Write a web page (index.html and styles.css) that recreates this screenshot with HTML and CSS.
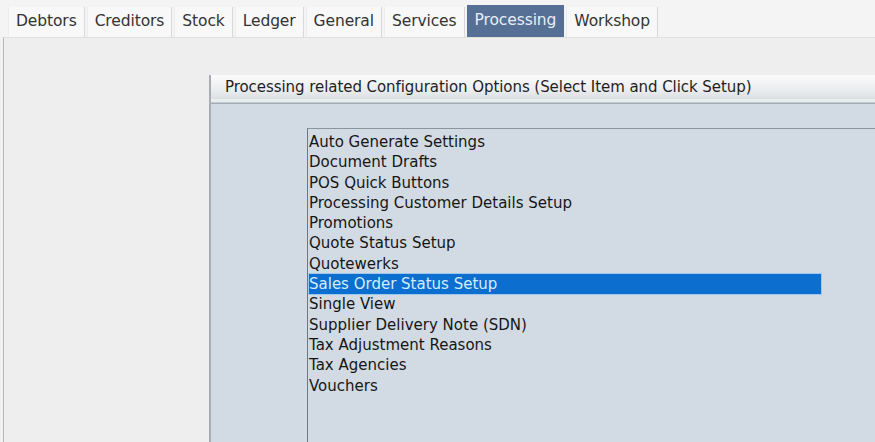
FILE: index.html
```html
<!DOCTYPE html>
<html>
<head>
<meta charset="utf-8">
<link rel="stylesheet" href="styles.css">
</head>
<body>
<div class="tabs">
  <div class="tab">Debtors</div>
  <div class="tab">Creditors</div>
  <div class="tab">Stock</div>
  <div class="tab">Ledger</div>
  <div class="tab">General</div>
  <div class="tab">Services</div>
  <div class="tab active">Processing</div>
  <div class="tab">Workshop</div>
</div>
<div class="content">
  <div class="panel">
    <div class="panel-header">Processing related Configuration Options (Select Item and Click Setup)</div>
    <div class="panel-body">
      <ul class="list">
        <li>Auto Generate Settings</li>
        <li>Document Drafts</li>
        <li>POS Quick Buttons</li>
        <li>Processing Customer Details Setup</li>
        <li>Promotions</li>
        <li>Quote Status Setup</li>
        <li>Quotewerks</li>
        <li class="selected">Sales Order Status Setup</li>
        <li>Single View</li>
        <li>Supplier Delivery Note (SDN)</li>
        <li>Tax Adjustment Reasons</li>
        <li>Tax Agencies</li>
        <li>Vouchers</li>
      </ul>
    </div>
  </div>
</div>
</body>
</html>
```

FILE: styles.css
```css
* { box-sizing: border-box; }
html, body {
  margin: 0;
  padding: 0;
  width: 875px;
  height: 442px;
  overflow: hidden;
  background: #f1f1f2;
  font-family: "DejaVu Sans", "Liberation Sans", sans-serif;
  color: #1a1a1a;
}
.tabs {
  display: flex;
  padding: 7px 0 0 8px;
  height: 37px;
  gap: 2px;
  background: #f4f4f4;
}
.tab {
  height: 30px;
  padding: 0 7px;
  font-size: 15.5px;
  line-height: 28px;
  background: #f8f8f8;
  border-right: 1px solid #d8d8d8;
  border-left: 1px solid #ececec;
  color: #333;
  letter-spacing: -0.1px;
}
.tab.active {
  background: #556f95;
  color: #e6eef8;
  margin-top: -2px;
  height: 32px;
  line-height: 30px;
  border: none;
  padding: 0 8px;
}
.content {
  height: 405px;
  margin-left: 3px;
  border-left: 1px solid #b9b9b9;
  border-top: 1px solid #e0e0e0;
  background: #eeeeef;
  padding: 37px 0 0 205px;
}
.panel {
  height: 100%;
  border-left: 2px solid #a9adb2;
  background: #d2dbe3;
}
.panel-header {
  height: 28px;
  padding-left: 14px;
  line-height: 24px;
  font-size: 15px;
  letter-spacing: -0.06px;
  color: #1f1f1f;
  background: linear-gradient(to bottom, #fbfbfb 0%, #e9ebed 60%, #d7dbe0 100%);
  border-bottom: 1px solid #c2ccd2;
  box-shadow: inset 0 -3px 0 #e8edf0;
  white-space: nowrap;
}
.panel-body {
  padding: 24px 0 0 96px;
  border-top: 1px solid #a4acb3;
}
.list {
  list-style: none;
  margin: 0;
  padding: 3px 0 0 1px;
  height: 330px;
  border-left: 1px solid #6f7880;
  border-top: 1px solid #8a949c;
  font-size: 15px;
  letter-spacing: 0;
}
.list li {
  width: 512px;
  height: 20.3px;
  line-height: 20px;
  color: #161616;
  white-space: nowrap;
}
.list li.selected {
  background: #0c6fcf;
  color: #d2ecff;
  box-shadow: 0 0 0 1px #9cc8ee;
}
```
